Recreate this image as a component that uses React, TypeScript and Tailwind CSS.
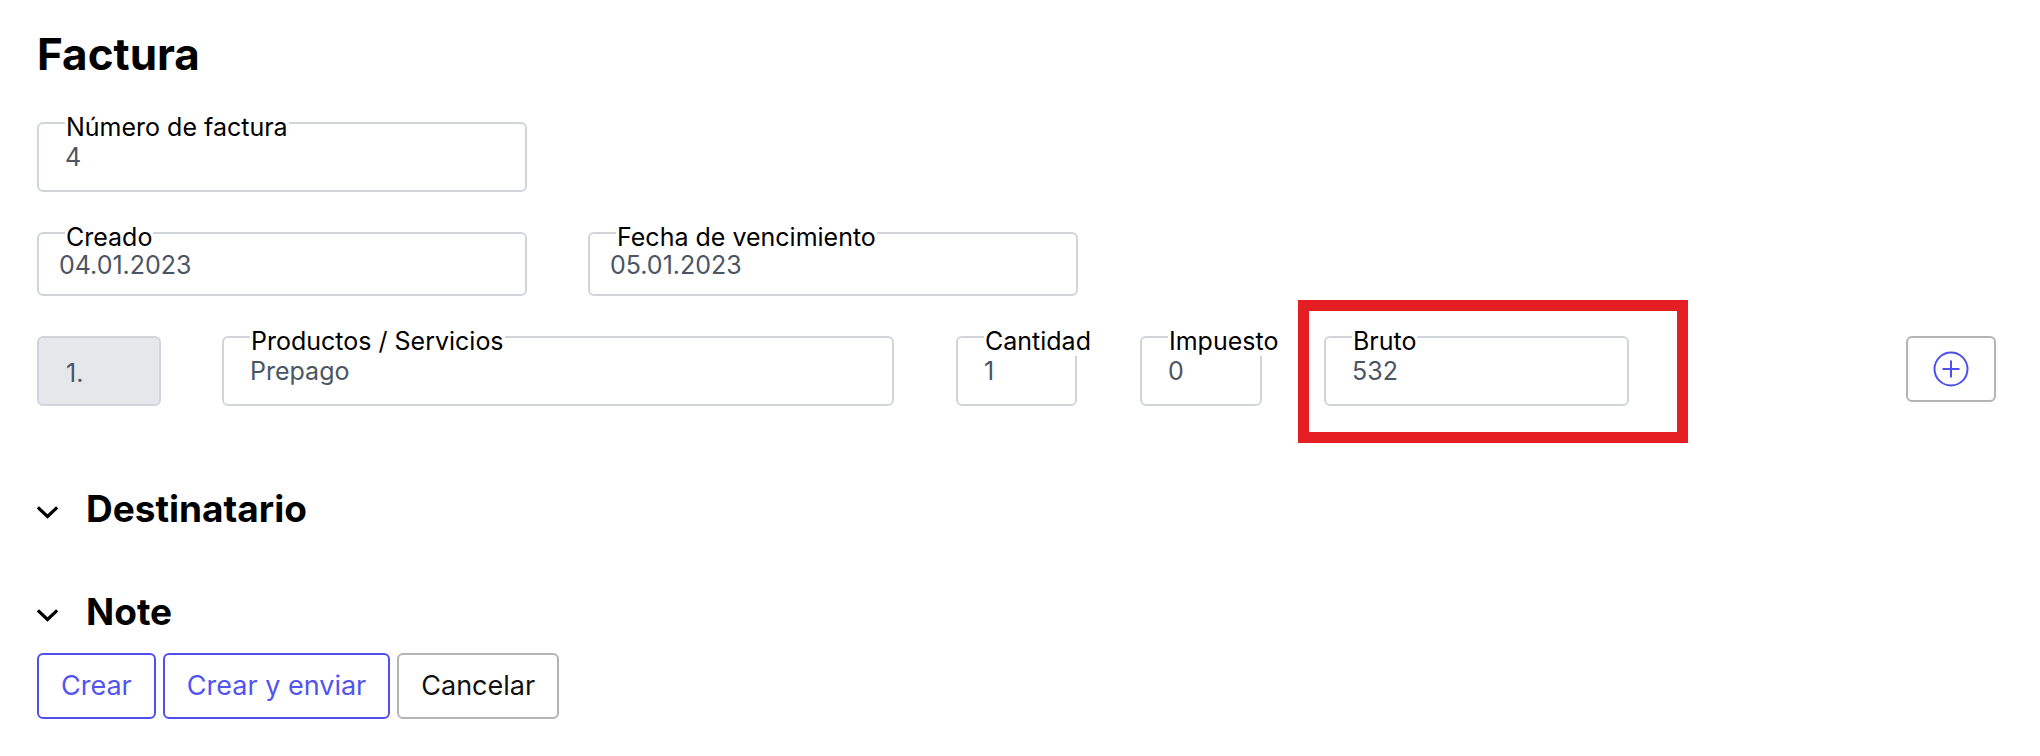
import type { ReactNode } from "react";

// Champ encadré avec libellé posé sur la bordure (fieldset + legend).
function Champ({ label, valeur, largeur, date, children }: { label: string; valeur?: string; largeur: string; date?: boolean; children?: ReactNode }) {
  return (
    <fieldset className={`${largeur} min-w-0 shrink-0 border-2 border-[#d1d5db] rounded-md bg-white px-[26px] ${date ? "pb-[16px]" : "pb-[18px]"}`}>
      <legend className="px-px pt-[8px] text-[25px] leading-[30px] text-black whitespace-nowrap">{label}</legend>
      {valeur !== undefined && (
        <div className={`text-[25px] text-[#4b5563] whitespace-nowrap ${date ? "leading-[26px] -ml-[6px]" : "leading-[30px]"}`}>{valeur}</div>
      )}
      {children}
    </fieldset>
  );
}

function Chevron() {
  return (
    <svg width="21" height="13" viewBox="0 0 21 13" className="mt-[16px] shrink-0" fill="none" stroke="black" strokeWidth="3.2" strokeLinecap="square">
      <path d="M2 2.5 L10.5 10.5 L19 2.5" />
    </svg>
  );
}

function PlusCercle() {
  return (
    <svg width="36" height="36" viewBox="0 0 36 36" fill="none" stroke="#4f4fef" strokeWidth="2">
      <circle cx="18" cy="18" r="16.5" />
      <path d="M18 9.5 V26.5 M9.5 18 H26.5" />
    </svg>
  );
}

export default function App() {
  return (
    <div className="min-h-screen bg-white font-[Inter,sans-serif] text-black pl-[37px] pt-[32px]">
      <h1 className="text-[44px] leading-none font-bold">Factura</h1>

      <div className="mt-[28px]">
        <Champ label="Número de factura" valeur="4" largeur="w-[490px]" />
      </div>

      <div className="mt-[22px] flex gap-[61px]">
        <Champ label="Creado" valeur="04.01.2023" largeur="w-[490px]" date />
        <Champ label="Fecha de vencimiento" valeur="05.01.2023" largeur="w-[490px]" date />
      </div>

      {/* Ligne de produit */}
      <div className="mt-[22px] flex items-end">
        <div className="w-[124px] h-[70px] shrink-0 border-2 border-[#d1d5db] rounded-md bg-[#e5e7eb] pl-[27px] pt-[20px] text-[25px] leading-[30px] text-[#4b5563]">1.</div>
        <div className="ml-[61px]">
          <Champ label="Productos / Servicios" valeur="Prepago" largeur="w-[672px]" />
        </div>
        <div className="ml-[62px]">
          <Champ label="Cantidad" valeur="1" largeur="w-[121px]" />
        </div>
        <div className="ml-[63px]">
          <Champ label="Impuesto" valeur="0" largeur="w-[122px]" />
        </div>
        <div className="ml-[62px] relative">
          <Champ label="Bruto" valeur="532" largeur="w-[305px]" />
          <div className="absolute -left-[26px] -top-[18px] w-[390px] h-[143px] border-[11px] border-[#e41e22] pointer-events-none" />
        </div>
        <button className="ml-[277px] mb-[4px] w-[90px] h-[66px] shrink-0 border-2 border-[#b4b4b4] rounded-md bg-white flex items-center justify-center">
          <PlusCercle />
        </button>
      </div>

      <div className="mt-[84px] flex items-start gap-[28px]">
        <Chevron />
        <h2 className="text-[37px] leading-none font-bold">Destinatario</h2>
      </div>

      <div className="mt-[66px] flex items-start gap-[28px]">
        <Chevron />
        <h2 className="text-[37px] leading-none font-bold">Note</h2>
      </div>

      <div className="mt-[23px] flex gap-[7px]">
        <button className="h-[66px] px-[22px] border-2 border-[#4f4fef] rounded-md bg-white text-[27px] text-[#5353f2]">Crear</button>
        <button className="h-[66px] px-[22px] border-2 border-[#4f4fef] rounded-md bg-white text-[27px] text-[#5353f2]">Crear y enviar</button>
        <button className="h-[66px] px-[22px] border-2 border-[#b4b4b4] rounded-md bg-white text-[27px] text-[#111]">Cancelar</button>
      </div>
    </div>
  );
}
